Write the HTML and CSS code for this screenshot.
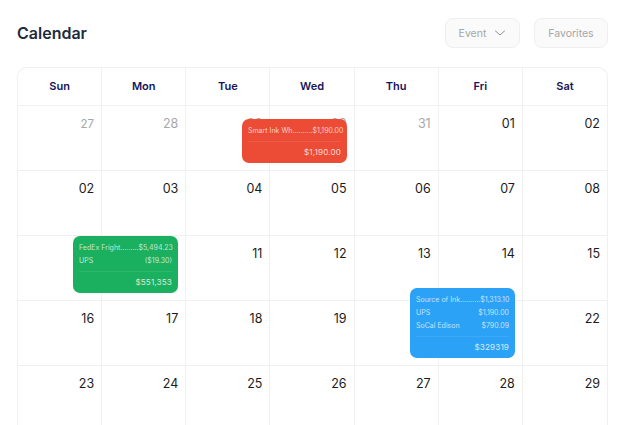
FILE: index.html
```html
<!DOCTYPE html>
<html lang="en">
<head>
<meta charset="utf-8">
<title>Calendar</title>
<link rel="stylesheet" href="styles.css">
</head>
<body>
<div class="page">
  <header class="top">
    <h1 class="title">Calendar</h1>
    <div class="actions">
      <button class="btn btn-event">Event
        <svg class="chev" width="12" height="12" viewBox="0 0 12 12" fill="none"><path d="M1.5 4l4.5 4 4.5-4" stroke="#8f8f8f" stroke-width="1" stroke-linecap="round" stroke-linejoin="round"/></svg>
      </button>
      <button class="btn btn-fav">Favorites</button>
    </div>
  </header>
  <div class="calendar">
    <div class="grid">
      <div class="head">Sun</div><div class="head">Mon</div><div class="head">Tue</div><div class="head">Wed</div><div class="head">Thu</div><div class="head">Fri</div><div class="head">Sat</div>

      <div class="cell muted small">27</div><div class="cell muted">28</div><div class="cell muted">29</div><div class="cell muted">30</div><div class="cell muted">31</div><div class="cell">01</div><div class="cell">02</div>
      <div class="cell">02</div><div class="cell">03</div><div class="cell">04</div><div class="cell">05</div><div class="cell">06</div><div class="cell">07</div><div class="cell">08</div>
      <div class="cell"></div><div class="cell"></div><div class="cell">11</div><div class="cell">12</div><div class="cell">13</div><div class="cell">14</div><div class="cell">15</div>
      <div class="cell">16</div><div class="cell">17</div><div class="cell">18</div><div class="cell">19</div><div class="cell"></div><div class="cell"></div><div class="cell">22</div>
      <div class="cell">23</div><div class="cell">24</div><div class="cell">25</div><div class="cell">26</div><div class="cell">27</div><div class="cell">28</div><div class="cell">29</div>
    </div>

    <div class="event event-red">
      <div class="line"><span>Smart Ink Wh..........</span><span>$1,190.00</span></div>
      <div class="total">$1,190.00</div>
    </div>
    <div class="event event-green">
      <div class="line"><span>FedEx Fright.........</span><span>$5,494.23</span></div>
      <div class="line"><span>UPS</span><span>($19.30)</span></div>
      <div class="total">$551,353</div>
    </div>
    <div class="event event-blue">
      <div class="line"><span>Source of Ink..........</span><span>$1,313.10</span></div>
      <div class="line"><span>UPS</span><span>$1,190.00</span></div>
      <div class="line"><span>SoCal Edison</span><span>$790.09</span></div>
      <div class="total">$329319</div>
    </div>
  </div>
</div>
</body>
</html>
```
FILE: styles.css
```css
* { box-sizing: border-box; }
html, body { margin: 0; height: 100%; overflow: hidden; background: #fff; }
body { font-family: Inter, "Liberation Sans", sans-serif; }
.page { width: 625px; height: 425px; padding: 18px 17px 0 17px; overflow: hidden; }
.top { display: flex; justify-content: space-between; align-items: center; height: 30px; margin-bottom: 19px; }
.title { margin: 0; font-size: 16px; font-weight: 600; color: #1d2b3c; line-height: 30px; }
.actions { display: flex; gap: 14px; }
.btn { height: 30px; border: 1px solid #efefef; border-radius: 8px; background: #fafafa; color: #a6a6a6; font: 400 10.5px Inter, sans-serif; padding: 0; display: flex; align-items: center; justify-content: center; }
.btn-event { width: 75px; gap: 8px; }
.btn-fav { width: 74px; }
.chev { display: block; }
.calendar { position: relative; width: 591px; }
.grid { display: grid; grid-template-columns: repeat(7, 1fr); grid-template-rows: 37.5px repeat(5, 65px); border: 1px solid #f0f0f0; border-bottom: 0; border-radius: 10px 10px 0 0; }
.head { display: flex; align-items: center; justify-content: center; font-size: 11px; font-weight: 600; color: #14145a; border-right: 1px solid #f0f0f0; border-bottom: 1px solid #f0f0f0; }
.head:nth-child(7) { border-right: 0; }
.cell { padding: 10px 7px 0 0; text-align: right; font-size: 12.5px; line-height: 16px; color: #1c1c1c; border-right: 1px solid #f0f0f0; border-bottom: 1px solid #f0f0f0; }
.cell:nth-child(7n) { border-right: 0; }
.muted { color: #a8a8a8; }
.small { font-size: 11.5px; }
.event { position: absolute; width: 105px; border-radius: 7px; padding: 5px 6px 0; color: rgba(255,255,255,.72); font-size: 7px; line-height: 13px; }
.line { display: flex; justify-content: space-between; white-space: nowrap; }
.total { margin-top: 4px; padding-top: 4px; border-top: 1px solid rgba(255,255,255,.09); text-align: right; font-size: 8.2px; letter-spacing: 0.1px; color: rgba(255,255,255,.8); }
.event-red { left: 225px; top: 52px; height: 44px; background: #ec4c35; }
.event-green { left: 56px; top: 169px; height: 57px; background: #1bb05f; }
.event-blue { left: 393px; top: 221px; height: 70px; background: #2ba2f6; }
```
